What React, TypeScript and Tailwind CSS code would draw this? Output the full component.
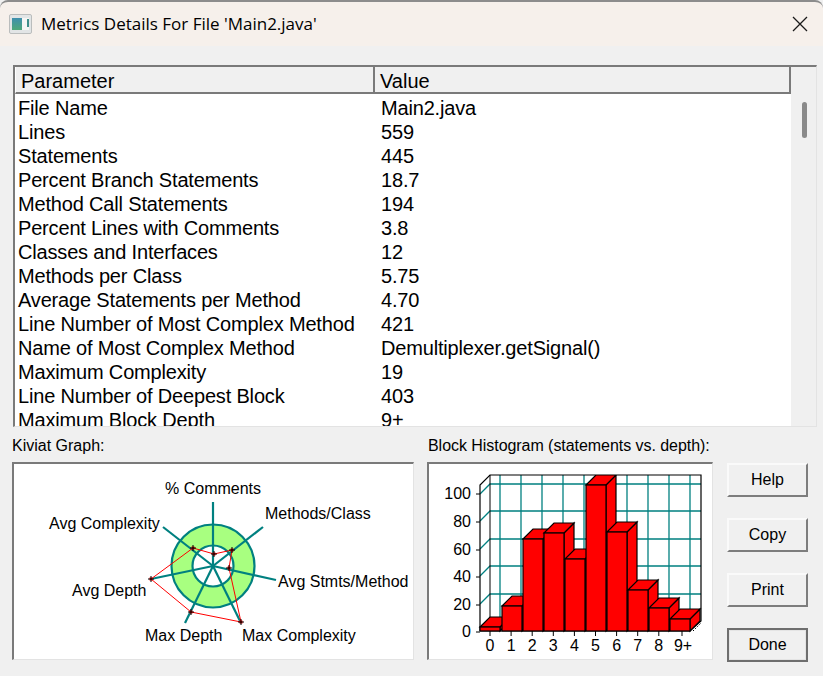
import React from "react";

const rows: [string, string][] = [
  ["File Name", "Main2.java"],
  ["Lines", "559"],
  ["Statements", "445"],
  ["Percent Branch Statements", "18.7"],
  ["Method Call Statements", "194"],
  ["Percent Lines with Comments", "3.8"],
  ["Classes and Interfaces", "12"],
  ["Methods per Class", "5.75"],
  ["Average Statements per Method", "4.70"],
  ["Line Number of Most Complex Method", "421"],
  ["Name of Most Complex Method", "Demultiplexer.getSignal()"],
  ["Maximum Complexity", "19"],
  ["Line Number of Deepest Block", "403"],
  ["Maximum Block Depth", "9+"],
];

const TEAL = "#008080";

const Kiviat = () => {
  const cx = 213;
  const cy = 566;
  const spokes = [
    [213, 502],
    [263, 527],
    [276, 580],
    [241, 623],
    [185, 623],
    [151, 579],
    [163, 527],
  ];
  const points = [
    [214, 554],
    [232, 550],
    [229, 568],
    [241, 622],
    [191, 612],
    [151, 579],
    [193, 548],
  ];
  const labels: [string, number, number][] = [
    ["% Comments", 165, 494],
    ["Methods/Class", 265, 519],
    ["Avg Complexity", 49, 529],
    ["Avg Stmts/Method", 278, 587],
    ["Avg Depth", 72, 596],
    ["Max Depth", 145, 641],
    ["Max Complexity", 242, 641],
  ];
  return (
    <svg viewBox="14 464 399 195" className="w-[399px] h-[195px] block">
      <circle cx={cx} cy={cy} r={41.5} fill="#a8ff80" stroke={TEAL} strokeWidth="2.2" />
      <circle cx={cx} cy={cy} r={20.5} fill="#ffffff" stroke={TEAL} strokeWidth="2.2" />
      {spokes.map(([x, y]) => (
        <line key={`${x}-${y}`} x1={cx} y1={cy} x2={x} y2={y} stroke={TEAL} strokeWidth="2.2" />
      ))}
      <polygon
        points={points.map((p) => p.join(",")).join(" ")}
        fill="none"
        stroke="#ff0000"
        strokeWidth="1"
      />
      {points.map(([x, y]) => (
        <g key={`${x}-${y}`}>
          <rect x={x - 1.5} y={y - 1.5} width="3" height="3" fill="#ff0000" />
          <path d={`M${x - 3} ${y}h6M${x} ${y - 3}v6`} stroke="#000" strokeWidth="1" />
        </g>
      ))}
      {labels.map(([t, x, y]) => (
        <text key={t} x={x} y={y} fontSize="16" fill="#000" fontFamily="'Liberation Sans', sans-serif">
          {t}
        </text>
      ))}
    </svg>
  );
};

const Histogram = () => {
  const bars: [number, number][] = [
    [480, 627],
    [502, 606],
    [523, 539],
    [544, 533],
    [565, 559],
    [586, 485],
    [607, 532],
    [628, 590],
    [649, 608],
    [670, 619],
  ];
  const base = 631;
  const hLines = [484, 511, 539, 566, 594];
  const vLines = [500, 521, 542, 563, 584, 605, 627, 648, 669, 690];
  const yLabels: [string, number][] = [
    ["100", 493],
    ["80", 521],
    ["60", 549],
    ["40", 576],
    ["20", 604],
    ["0", 631],
  ];
  const xLabels = ["0", "1", "2", "3", "4", "5", "6", "7", "8", "9+"];
  const xCenter = (i: number) => (i === 9 ? 683 : 490 + i * 21.1);
  return (
    <svg viewBox="429 464 283 195" className="w-[283px] h-[195px] block">
      <clipPath id="plot">
        <rect x="470" y="475" width="240" height="170" />
      </clipPath>
      {hLines.map((y) => (
        <path key={y} d={`M480 ${y + 10}L490 ${y}H701`} fill="none" stroke={TEAL} strokeWidth="1.3" />
      ))}
      {vLines.map((x) => (
        <line key={x} x1={x} y1="475" x2={x} y2="621" stroke={TEAL} strokeWidth="1.3" />
      ))}
      <path d="M480 631V485L490 475H701V621L690 631H480" fill="none" stroke="#000" strokeWidth="1.2" />
      <line x1="490" y1="475" x2="490" y2="621" stroke="#000" strokeWidth="1" />
      <g clipPath="url(#plot)">
        {bars.map(([x, top]) => (
          <g key={x} stroke="#000" strokeWidth="1.2" fill="#ff0000">
            <path d={`M${x + 20} ${top}l10 -10V${base - 10}L${x + 20} ${base}Z`} />
            <path d={`M${x} ${top}l10 -10h20l-10 10Z`} />
            <rect x={x} y={top} width="20" height={base - top} />
          </g>
        ))}
      </g>
      <path d="M693 631l8-8" stroke="#000" strokeWidth="1" strokeDasharray="1.5 1.5" />
      {yLabels.map(([t, y]) => (
        <g key={t}>
          <line x1="476" y1={y + 1} x2="480" y2={y + 1} stroke="#000" strokeWidth="1" />
          <text
            x="471"
            y={y + 6}
            textAnchor="end"
            fontSize="16"
            fill="#000"
            fontFamily="'Liberation Sans', sans-serif"
          >
            {t}
          </text>
        </g>
      ))}
      {xLabels.map((t, i) => (
        <g key={t}>
          <line x1={i === 9 ? 682 : xCenter(i)} y1="631" x2={i === 9 ? 682 : xCenter(i)} y2="636" stroke="#000" strokeWidth="1" />
          <text
            x={xCenter(i)}
            y="651"
            textAnchor="middle"
            fontSize="16"
            fill="#000"
            fontFamily="'Liberation Sans', sans-serif"
          >
            {t}
          </text>
        </g>
      ))}
    </svg>
  );
};

const DialogButton = ({ label, isDefault }: { label: string; isDefault?: boolean }) => (
  <button
    className={
      "w-[81px] h-[34px] bg-[#f0f0f0] text-[16px] text-black flex items-center justify-center border-2 " +
      (isDefault
        ? "border-[#6e6e6e] shadow-[inset_1px_1px_0_#e4e4e4,inset_-1px_-1px_0_#e4e4e4]"
        : "border-t-[#fafafa] border-l-[#fafafa] border-r-[#7d7d7d] border-b-[#7d7d7d]")
    }
  >
    {label}
  </button>
);

export default function App() {
  return (
    <div className="w-[823px] h-[676px] overflow-hidden bg-[#f0f0f0] font-['Liberation_Sans',sans-serif]">
      <header className="h-[46px] border-t-2 border-[#8c8c8c] rounded-t-[8px] bg-[#f6f0eb] flex items-center pl-[9px] pr-[15px]">
        <svg width="23" height="20" viewBox="0 0 23 20" className="shrink-0">
          <defs>
            <linearGradient id="appIcon" x1="0" y1="0" x2="0" y2="1">
              <stop offset="0" stopColor="#3f8fae" />
              <stop offset="1" stopColor="#4fa878" />
            </linearGradient>
          </defs>
          <rect x="0.5" y="0.5" width="22" height="19" rx="1.5" fill="#e2e5e6" stroke="#babdbd" />
          <rect x="3" y="4" width="10" height="12" fill="url(#appIcon)" />
          <rect x="13" y="4" width="7" height="12" fill="#f6f6f4" />
          <rect x="18" y="5" width="2" height="8" fill="#3f8f8a" />
        </svg>
        <span className="ml-[9px] text-[17px] text-black font-['Open_Sans',sans-serif] whitespace-nowrap">
          Metrics Details For File 'Main2.java'
        </span>
        <svg width="16" height="16" viewBox="0 0 16 16" className="ml-auto" fill="none" stroke="#1a1a1a" strokeWidth="1.3">
          <path d="M1 1l14 14M15 1L1 15" />
        </svg>
      </header>

      <div className="px-[13px] pt-[19px]">
        {/* metrics list */}
        <div className="w-[804px] h-[362px] border-t-2 border-l-2 border-[#7a7a7a] border-b border-r border-b-[#e3e3e3] border-r-[#e3e3e3] bg-white flex overflow-hidden">
          <div className="w-[776px] shrink-0">
            <div className="h-[27px] flex bg-[#f0f0f0] text-[20px] leading-[28px] text-black">
              <div className="w-[360px] pl-[5px] border-r-2 border-b-2 border-[#7a7a7a] border-l border-l-white">Parameter</div>
              <div className="flex-1 pl-[5px] border-r-2 border-b-2 border-[#7a7a7a]">Value</div>
            </div>
            <div className="pt-[2px] text-[20px] leading-[24px] text-black tracking-[-0.17px]">
              {rows.map(([name, value]) => (
                <div key={name} className="flex h-[24px] whitespace-nowrap">
                  <div className="w-[366px] pl-[3px]">{name}</div>
                  <div>{value}</div>
                </div>
              ))}
            </div>
          </div>
          <div className="flex-1 bg-[#f0f0f0] pt-[35px] pl-[11px]">
            <div className="w-[5px] h-[36px] rounded-full bg-[#8a8a8a]" />
          </div>
        </div>

        {/* lower panels */}
        <div className="flex mt-[9px] -ml-[1px]">
          <div className="w-[402px]">
            <div className="h-[26px] text-[16px] leading-[20px] text-black">Kiviat Graph:</div>
            <div className="w-[402px] h-[198px] border-t-2 border-l-2 border-[#7a7a7a] border-r border-b border-r-[#e3e3e3] border-b-[#e3e3e3] bg-white">
              <Kiviat />
            </div>
          </div>
          <div className="w-[286px] ml-[13px]">
            <div className="h-[26px] pl-[1px] text-[16px] leading-[20px] text-black whitespace-nowrap tracking-[-0.05px]">
              Block Histogram (statements vs. depth):
            </div>
            <div className="w-[286px] h-[198px] border-t-2 border-l-2 border-[#7a7a7a] border-r border-b border-r-[#e3e3e3] border-b-[#e3e3e3] bg-white">
              <Histogram />
            </div>
          </div>
          <div className="ml-[14px] pt-[27px] flex flex-col gap-[21px]">
            <DialogButton label="Help" />
            <DialogButton label="Copy" />
            <DialogButton label="Print" />
            <DialogButton label="Done" isDefault />
          </div>
        </div>
      </div>
    </div>
  );
}
